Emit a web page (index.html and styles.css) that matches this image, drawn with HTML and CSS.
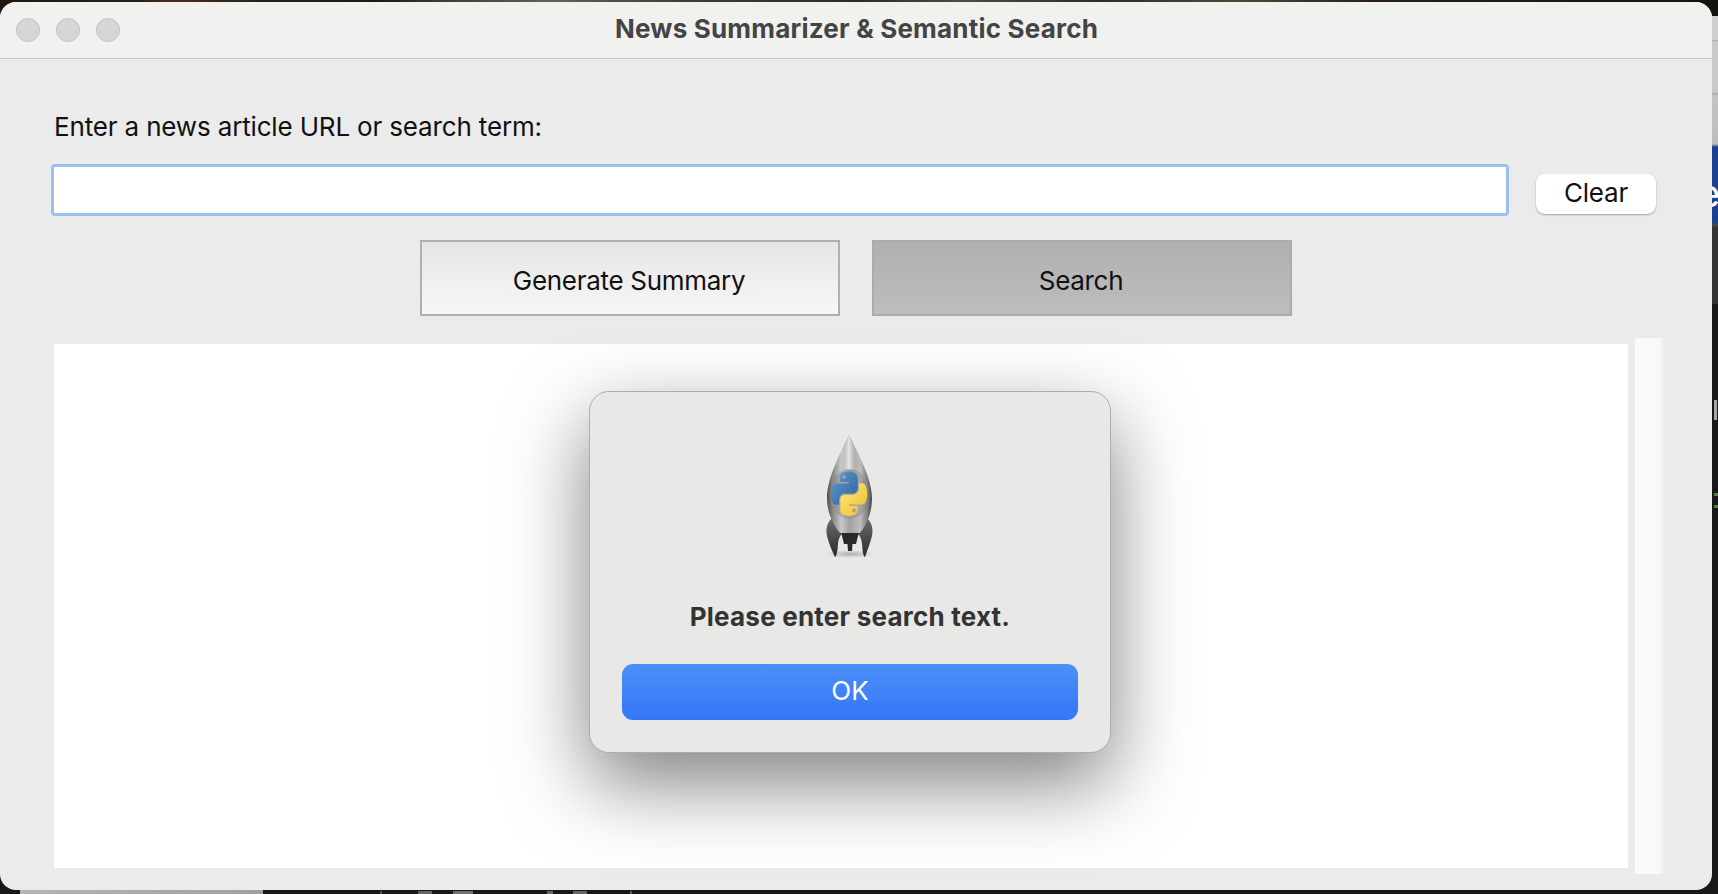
FILE: index.html
```html
<!DOCTYPE html>
<html lang="en">
<head>
  <meta charset="UTF-8" />
  <meta name="viewport" content="width=device-width, initial-scale=1.0" />
  <title>News Summarizer &amp; Semantic Search</title>
  <link rel="stylesheet" href="styles.css">
</head>
<body>
  <div class="desk-edge">
    <span class="edge-letter">e</span>
    <span class="edge-block"></span>
    <span class="edge-dash edge-dash-one"></span>
    <span class="edge-dash edge-dash-two"></span>
  </div>

  <div class="window">
    <header class="titlebar">
      <div class="lights">
        <span class="light"></span>
        <span class="light"></span>
        <span class="light"></span>
      </div>
      <div class="title">News Summarizer &amp; Semantic Search</div>
    </header>

    <main class="content">
      <label class="prompt" for="query">Enter a news article URL or search term:</label>

      <div class="query-row">
        <input class="query" id="query" type="text" />
        <button class="clear">Clear</button>
      </div>

      <div class="actions">
        <button class="action">Generate Summary</button>
        <button class="action action-pressed">Search</button>
      </div>

      <div class="output-row">
        <div class="output"></div>
        <div class="scrollbar"></div>
      </div>
    </main>

    <div class="dialog">
      <svg class="rocket" viewBox="0 0 160 150" width="160" height="150" aria-hidden="true">
        <defs>
          <linearGradient id="hull" x1="0" y1="0" x2="1" y2="0">
            <stop offset="0" stop-color="#4f4f50" />
            <stop offset="0.12" stop-color="#858585" />
            <stop offset="0.32" stop-color="#c9c9c9" />
            <stop offset="0.5" stop-color="#a2a2a2" />
            <stop offset="0.74" stop-color="#bdbdbd" />
            <stop offset="0.9" stop-color="#7c7c7c" />
            <stop offset="1" stop-color="#474748" />
          </linearGradient>
          <linearGradient id="nose" x1="0" y1="0" x2="1" y2="0">
            <stop offset="0.2" stop-color="#e9e9e9" stop-opacity="0" />
            <stop offset="0.5" stop-color="#f2f2f2" stop-opacity="0.85" />
            <stop offset="0.8" stop-color="#e9e9e9" stop-opacity="0" />
          </linearGradient>
          <linearGradient id="fin" x1="0" y1="0" x2="0" y2="1">
            <stop offset="0" stop-color="#6c6c6c" />
            <stop offset="1" stop-color="#2a2a2a" />
          </linearGradient>
          <linearGradient id="snake-blue" x1="0" y1="0" x2="1" y2="1">
            <stop offset="0" stop-color="#5d9fd6" />
            <stop offset="1" stop-color="#2c5f92" />
          </linearGradient>
          <linearGradient id="snake-yellow" x1="0" y1="0" x2="1" y2="1">
            <stop offset="0" stop-color="#ffe873" />
            <stop offset="1" stop-color="#eebf36" />
          </linearGradient>
          <radialGradient id="ground">
            <stop offset="0" stop-color="#888" stop-opacity="0.6" />
            <stop offset="1" stop-color="#888" stop-opacity="0" />
          </radialGradient>
        </defs>
        <ellipse cx="80" cy="134" rx="24" ry="4" fill="url(#ground)" />
        <path d="M62 98 C56 104 56 110 57 116 C59 124 62 131 65 137 C67 136 67.5 130 68 124 C68.5 118 71 114 74 112 Z" fill="url(#fin)" />
        <path d="M97 98 C103 104 103 110 102 116 C100 124 97 131 95 137 C93 136 92.5 130 92 124 C91.5 118 89 114 86 112 Z" fill="url(#fin)" />
        <path d="M71 112 H89 L86 124 H82.5 L82 131 H78 L77.5 124 H74 Z" fill="#2a2a2b" />
        <path d="M79 15 C74 26 57 56 57 78 C57 94 64 106 70 113 H90 C96 106 102 94 102 78 C102 56 84 26 79 15 Z" fill="url(#hull)" />
        <path d="M79 15 C76 24 70 38 69 50 H89 C88 38 82 24 79 15 Z" fill="url(#nose)" />
        <ellipse cx="79.5" cy="74" rx="20" ry="25" fill="#8a8a8a" opacity="0.45" />
        <g transform="translate(60.5,51.5) scale(.335,.4)">
          <path d="M54.9,0.9c-4.6,0-9,0.4-12.8,1.1C30.8,4,28.8,8.2,28.8,16v10.3h26.1v3.4H28.8H19c-7.6,0-14.2,4.6-16.3,13.2c-2.4,10-2.5,16.2,0,26.6C4.6,77.3,9.1,83,16.7,83h9v-12c0-8.7,7.5-16.3,16.4-16.3h26.1c7.3,0,13-6,13-13.2V16c0-7-5.9-12.3-13-13.5C63.7,1.2,59.1,0.9,54.9,0.9z M40.8,8.9c2.7,0,4.9,2.2,4.9,4.9c0,2.7-2.2,4.9-4.9,4.9c-2.7,0-4.9-2.2-4.9-4.9C35.9,11.1,38.1,8.9,40.8,8.9z" fill="url(#snake-blue)" />
          <path d="M84.8,29.7V41.3c0,9-7.6,16.6-16.4,16.6H42.3c-7.2,0-13,6.1-13,13.2v24.9c0,7.1,6.2,11.3,13,13.3c8.2,2.4,16.1,2.8,26.1,0c6.5-1.9,13-5.6,13-13.3V85.9H55.4v-3.4h26.1h13c7.6,0,10.4-5.3,13-13.2c2.7-8.2,2.6-16,0-26.6c-1.9-7.6-5.4-13.2-13-13.2z M70.1,92.8c2.7,0,4.9,2.2,4.9,4.9c0,2.7-2.2,4.9-4.9,4.9c-2.7,0-4.9-2.2-4.9-4.9C65.2,95,67.4,92.8,70.1,92.8z" fill="url(#snake-yellow)" />
        </g>
      </svg>
      <p class="dialog-text">Please enter search text.</p>
      <button class="ok">OK</button>
    </div>
  </div>

  <div class="desk-bottom">
    <span class="desk-bottom-bar"></span>
    <span class="desk-bottom-marks"></span>
  </div>
</body>
</html>
```

FILE: styles.css
```css
html, body {
  margin: 0;
  height: 100%;
}
body {
  width: 1718px;
  height: 894px;
  overflow: hidden;
  position: relative;
  font-family: Inter, "Liberation Sans", sans-serif;
  color: #111;
  background-color: #17181a;
  background-image: linear-gradient(to right, #20170f 0, #2a2015 8%, #4a2c20 10%, #2e2418 14%, #1d1a14 22%, #3c4032 26%, #5a6458 32%, #39402f 40%, #2b2e22 50%, #46503f 56%, #2a3022 64%, #4a4a3a 72%, #2c1f16 80%, #1e1a14 90%, #15130f 100%);
  background-size: 100% 20px;
  background-repeat: no-repeat;
}
button, input {
  font-family: inherit;
}

/* what shows of the desktop to the right of the window */
.desk-edge {
  position: absolute;
  left: 1712px;
  top: 16px;
  width: 6px;
  height: 290px;
  overflow: hidden;
  background: linear-gradient(to bottom, #cfcfcf 0, #cfcfcf 24px, #a9a9a9 24px, #c9c9c9 26px, #c9c9c9 77px, #a6a6a6 77px, #c4c4c4 80px, #bdbdbd 128px, #1c3f8f 131px, #1c3f8f 207px, #4d4d4d 208px, #333 212px, #333 288px, #17181a 288px);
}
.edge-letter {
  position: absolute;
  left: -14px;
  top: 152px;
  font-size: 38px;
  line-height: 50px;
  color: #fff;
}
.edge-block {
  position: fixed;
  left: 1714px;
  top: 400px;
  width: 3px;
  height: 20px;
  background: #a8a8a8;
}
.edge-dash {
  position: fixed;
  left: 1714px;
  width: 4px;
  height: 3px;
  background: #5c7d50;
}
.edge-dash-one { top: 493px; }
.edge-dash-two { top: 505px; }

.desk-bottom {
  display: flex;
  height: 4px;
  padding-left: 20px;
}
.desk-bottom-bar {
  width: 243px;
  height: 4px;
  background: linear-gradient(to right, #b5b5b5, #a0a0a0);
}
.desk-bottom-marks {
  width: 300px;
  height: 3px;
  margin: 1px 0 0 117px;
  opacity: 0.6;
  background: linear-gradient(to right, #777 0, #777 2px, transparent 2px, transparent 38px, #999 38px, #999 52px, transparent 52px, transparent 73px, #aaa 73px, #aaa 93px, transparent 93px, transparent 167px, #999 167px, #999 173px, transparent 173px, transparent 193px, #999 193px, #999 207px, transparent 207px, transparent 250px, #888 250px, #888 252px, transparent 252px);
}

.window {
  position: relative;
  width: 1712px;
  height: 888px;
  margin-top: 2px;
  background: #ebebeb;
  border-radius: 16px;
  overflow: hidden;
}

.titlebar {
  height: 56px;
  background: #f1f1ef;
  border-bottom: 1px solid #c9c9c9;
  display: flex;
  align-items: center;
  position: relative;
}
.lights {
  display: flex;
  gap: 16px;
  padding-left: 16px;
}
.light {
  width: 24px;
  height: 24px;
  box-sizing: border-box;
  border-radius: 50%;
  background: #d6d6d4;
  border: 1px solid #c2c2c0;
}
.title {
  position: absolute;
  left: 0;
  right: 0;
  top: 11px;
  padding-left: 1px;
  text-align: center;
  font-size: 26px;
  line-height: 32px;
  font-weight: 700;
  letter-spacing: 0.2px;
  color: #444;
}

.content {
  padding-left: 51px;
}
.prompt {
  display: block;
  margin: 52px 0 0 3px;
  font-size: 26px;
  line-height: 32px;
  letter-spacing: -0.16px;
  color: #111;
}
.query-row {
  display: flex;
  align-items: flex-start;
  margin-top: 21px;
}
.query {
  box-sizing: border-box;
  width: 1458px;
  height: 52px;
  padding: 0 8px;
  background: #fff;
  border: 3px solid #9dbff0;
  border-radius: 4px;
  outline: none;
}
.clear {
  width: 120px;
  height: 40px;
  margin: 10px 0 0 27px;
  padding: 0 0 3px;
  background: #fff;
  border: none;
  border-radius: 9px;
  box-shadow: 0 1px 2px rgba(0, 0, 0, 0.3);
  font-size: 26px;
  letter-spacing: -0.2px;
  color: #111;
}
.actions {
  display: flex;
  gap: 32px;
  margin: 24px 0 0 369px;
}
.action {
  box-sizing: border-box;
  width: 420px;
  height: 76px;
  padding: 4px 2px 0 0;
  background: linear-gradient(to bottom, #e5e5e5, #f7f7f7);
  border: 2px solid #b0b0b0;
  font-size: 26px;
  letter-spacing: -0.3px;
  color: #111;
}
.action-pressed {
  background: linear-gradient(to bottom, #b0b0b0, #bdbdbd);
  border-color: #ababab;
}
.output-row {
  display: flex;
  align-items: flex-start;
  margin-top: 22px;
}
.output {
  width: 1574px;
  height: 524px;
  margin: 6px 0 0 3px;
  background: #fff;
}
.scrollbar {
  width: 28px;
  height: 536px;
  margin-left: 7px;
  background: linear-gradient(to right, #f9f9f9 26px, #f0f0f0 26px, #f0f0f0 27px, #f7f7f7 27px);
}

.dialog {
  position: absolute;
  left: 589px;
  top: 389px;
  box-sizing: border-box;
  width: 522px;
  height: 362px;
  padding-top: 28px;
  display: flex;
  flex-direction: column;
  align-items: center;
  background: #e8e8e6;
  border: 1px solid #adadad;
  border-radius: 20px;
  box-shadow: 0 30px 80px rgba(0, 0, 0, 0.5);
}
.rocket {
  display: block;
}
.dialog-text {
  margin: 31px 0 0;
  font-size: 26px;
  line-height: 32px;
  font-weight: 700;
  letter-spacing: 0.22px;
  color: #333;
}
.ok {
  width: 456px;
  height: 56px;
  margin-top: 31px;
  padding: 0 0 3px;
  background: linear-gradient(to bottom, #4c8ff8, #3576f6);
  border: none;
  border-radius: 11px;
  font-size: 26px;
  color: #fff;
}
```
